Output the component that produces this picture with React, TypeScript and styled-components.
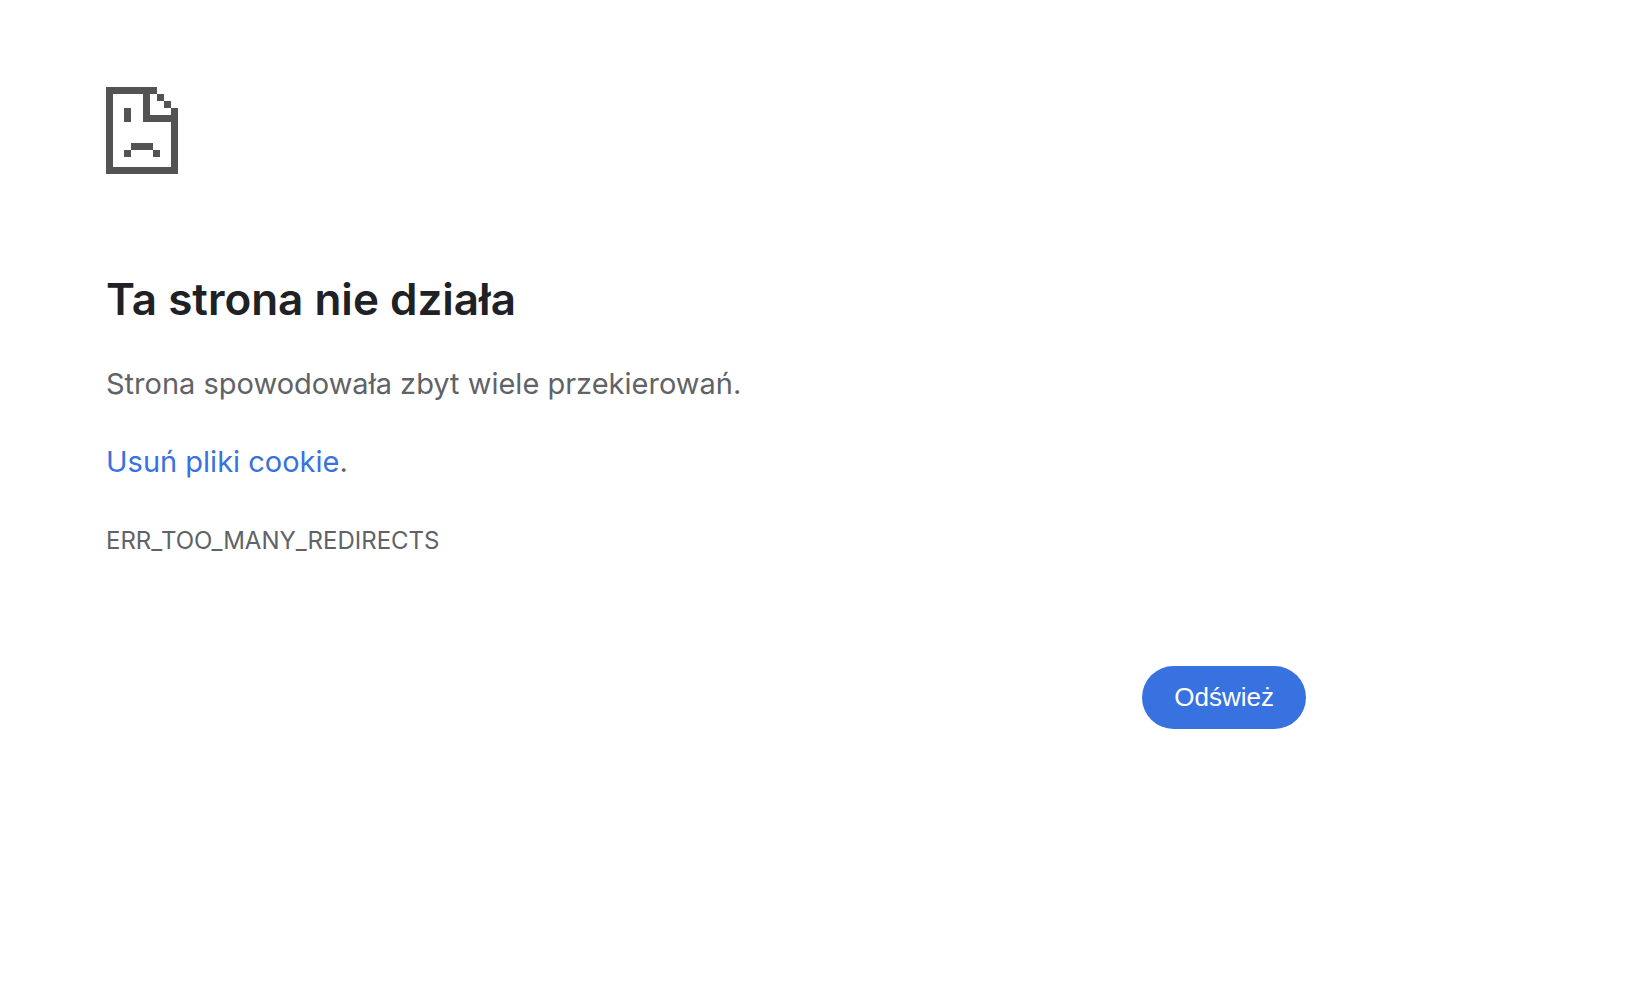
import React from "react";
import styled, { createGlobalStyle } from "styled-components";

const GlobalStyle = createGlobalStyle`
  *, *::before, *::after {
    box-sizing: border-box;
  }
  body {
    margin: 0;
    background: #ffffff;
    color: #5f6368;
    font-family: Inter, "Liberation Sans", sans-serif;
  }
`;

const ErrorPage = styled.main`
  max-width: 1306px;
  padding: 87px 0 32px 106px;
`;

const SadPage = styled.svg`
  display: block;
  width: 72px;
  height: 87px;
  margin-bottom: 96px;
  fill: #535353;
`;

const Title = styled.h1`
  margin: 0 0 32px;
  color: #202124;
  font-size: 44px;
  font-weight: 600;
  line-height: 58px;
`;

const Message = styled.p`
  margin: 0 0 30px;
  font-size: 29px;
  line-height: 48px;
`;

const ErrorCode = styled.div`
  font-size: 24px;
  line-height: 50px;
`;

const CookieLink = styled.a`
  color: #3871e0;
  text-decoration: none;
`;

const Actions = styled.div`
  display: flex;
  justify-content: flex-end;
  margin-top: 100px;
`;

const ReloadButton = styled.button`
  height: 63px;
  padding: 0 32px;
  border: 0;
  border-radius: 32px;
  background: #3871e0;
  color: #ffffff;
  font-family: "Liberation Sans", Arial, sans-serif;
  font-size: 26px;
  cursor: pointer;
`;

export default function App() {
  return (
    <>
      <GlobalStyle />
      <ErrorPage>
        <SadPage viewBox="0 0 72 87" shapeRendering="crispEdges" aria-hidden="true">
          <path d="M0 0H51V7H44V28H65V21H72V87H0ZM7 7V80H65V35H37V7Z" fillRule="evenodd" />
          <path d="M51 7h7v7h-7zM58 14h7v7h-7zM18 21h7v14h-7zM25 56h22v7H25zM18 63h7v7h-7zM47 63h7v7h-7z" />
        </SadPage>
        <Title>Ta strona nie działa</Title>
        <Message>Strona spowodowała zbyt wiele przekierowań.</Message>
        <Message>
          <CookieLink href="#cookies">Usuń pliki cookie</CookieLink>.
        </Message>
        <ErrorCode>ERR_TOO_MANY_REDIRECTS</ErrorCode>
        <Actions>
          <ReloadButton type="button">Odśwież</ReloadButton>
        </Actions>
      </ErrorPage>
    </>
  );
}
